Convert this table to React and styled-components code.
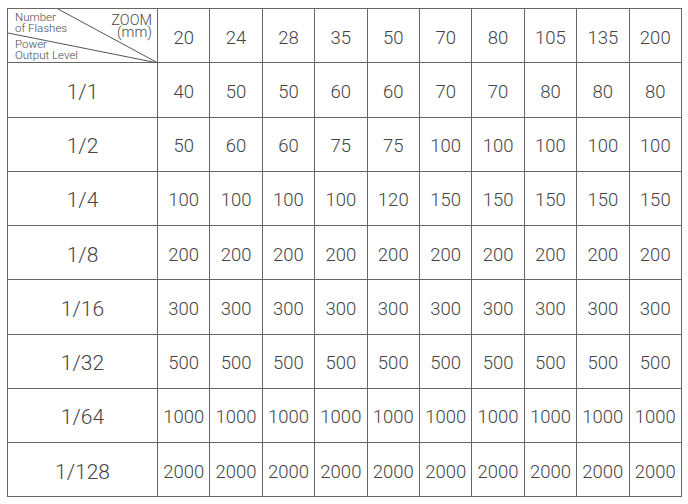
import React from 'react';
import styled, { createGlobalStyle } from 'styled-components';

const GlobalStyle = createGlobalStyle`
  html, body {
    margin: 0;
    padding: 0;
    background: #fff;
  }
  body {
    font-family: Roboto, "Liberation Sans", sans-serif;
  }
`;

const Page = styled.div`
  padding: 8px 0 0 7px;
`;

const Table = styled.table`
  width: 675px;
  table-layout: fixed;
  border-collapse: collapse;
  color: #444;
  font-weight: 300;
`;

const Row = styled.tr`
  height: 54.25px;
`;

const HeadCell = styled.th`
  border: 1px solid #666;
  padding: 5px 0 0;
  font-size: 18.5px;
  font-weight: 300;
  text-align: center;
  vertical-align: middle;
`;

const CornerCell = styled.th`
  position: relative;
  border: 1px solid #666;
  width: 150px;
  padding: 0;
  font-weight: 300;
  vertical-align: top;
`;

const Corner = styled.div`
  display: grid;
  grid-template-columns: 1fr auto;
  grid-template-rows: 27px auto;
  height: 53px;
  padding: 3px 5px 0 7px;
  box-sizing: border-box;
  text-align: left;
  color: #4a4a4a;
`;

const SmallLabel = styled.div`
  grid-column: 1;
  grid-row: ${(p) => p.$row};
  font-size: 11.5px;
  line-height: 10.5px;
`;

const ZoomLabel = styled.div`
  grid-column: 2;
  grid-row: 1 / span 2;
  font-size: 14.5px;
  line-height: 12px;
  text-align: right;
  padding-top: 3px;
`;

const Diagonals = styled.svg`
  position: absolute;
  left: 0;
  top: 0;
  width: 150px;
  height: 54px;
  pointer-events: none;
`;

const LevelCell = styled.td`
  border: 1px solid #666;
  padding: 4px 0 0;
  font-size: 21px;
  text-align: center;
  vertical-align: middle;
`;

const Cell = styled.td`
  border: 1px solid #666;
  padding: 4px 0 0;
  font-size: 18.5px;
  text-align: center;
  vertical-align: middle;
  white-space: nowrap;
  overflow: hidden;
`;

const zooms = [20, 24, 28, 35, 50, 70, 80, 105, 135, 200];

const rows = [
  ['1/1', [40, 50, 50, 60, 60, 70, 70, 80, 80, 80]],
  ['1/2', [50, 60, 60, 75, 75, 100, 100, 100, 100, 100]],
  ['1/4', [100, 100, 100, 100, 120, 150, 150, 150, 150, 150]],
  ['1/8', [200, 200, 200, 200, 200, 200, 200, 200, 200, 200]],
  ['1/16', [300, 300, 300, 300, 300, 300, 300, 300, 300, 300]],
  ['1/32', [500, 500, 500, 500, 500, 500, 500, 500, 500, 500]],
  ['1/64', [1000, 1000, 1000, 1000, 1000, 1000, 1000, 1000, 1000, 1000]],
  ['1/128', [2000, 2000, 2000, 2000, 2000, 2000, 2000, 2000, 2000, 2000]],
];

const App = () => {
  return (
    <Page>
      <GlobalStyle />
      <Table>
        <colgroup>
          <col style={{ width: 150 }} />
          {zooms.map((z) => (
            <col key={z} />
          ))}
        </colgroup>
        <thead>
          <Row>
            <CornerCell>
              <Diagonals viewBox="0 0 150 54">
                <line x1="50" y1="0" x2="150" y2="54" stroke="#555" strokeWidth="1" />
                <line x1="0" y1="24" x2="150" y2="54" stroke="#555" strokeWidth="1" />
              </Diagonals>
              <Corner>
                <SmallLabel $row={1}>
                  Number
                  <br />
                  of Flashes
                </SmallLabel>
                <ZoomLabel>
                  ZOOM
                  <br />
                  (mm)
                </ZoomLabel>
                <SmallLabel $row={2}>
                  Power
                  <br />
                  Output Level
                </SmallLabel>
              </Corner>
            </CornerCell>
            {zooms.map((z) => (
              <HeadCell key={z}>{z}</HeadCell>
            ))}
          </Row>
        </thead>
        <tbody>
          {rows.map(([level, values]) => (
            <Row key={level}>
              <LevelCell>{level}</LevelCell>
              {values.map((v, i) => (
                <Cell key={i}>{v}</Cell>
              ))}
            </Row>
          ))}
        </tbody>
      </Table>
    </Page>
  );
};

export default App;
